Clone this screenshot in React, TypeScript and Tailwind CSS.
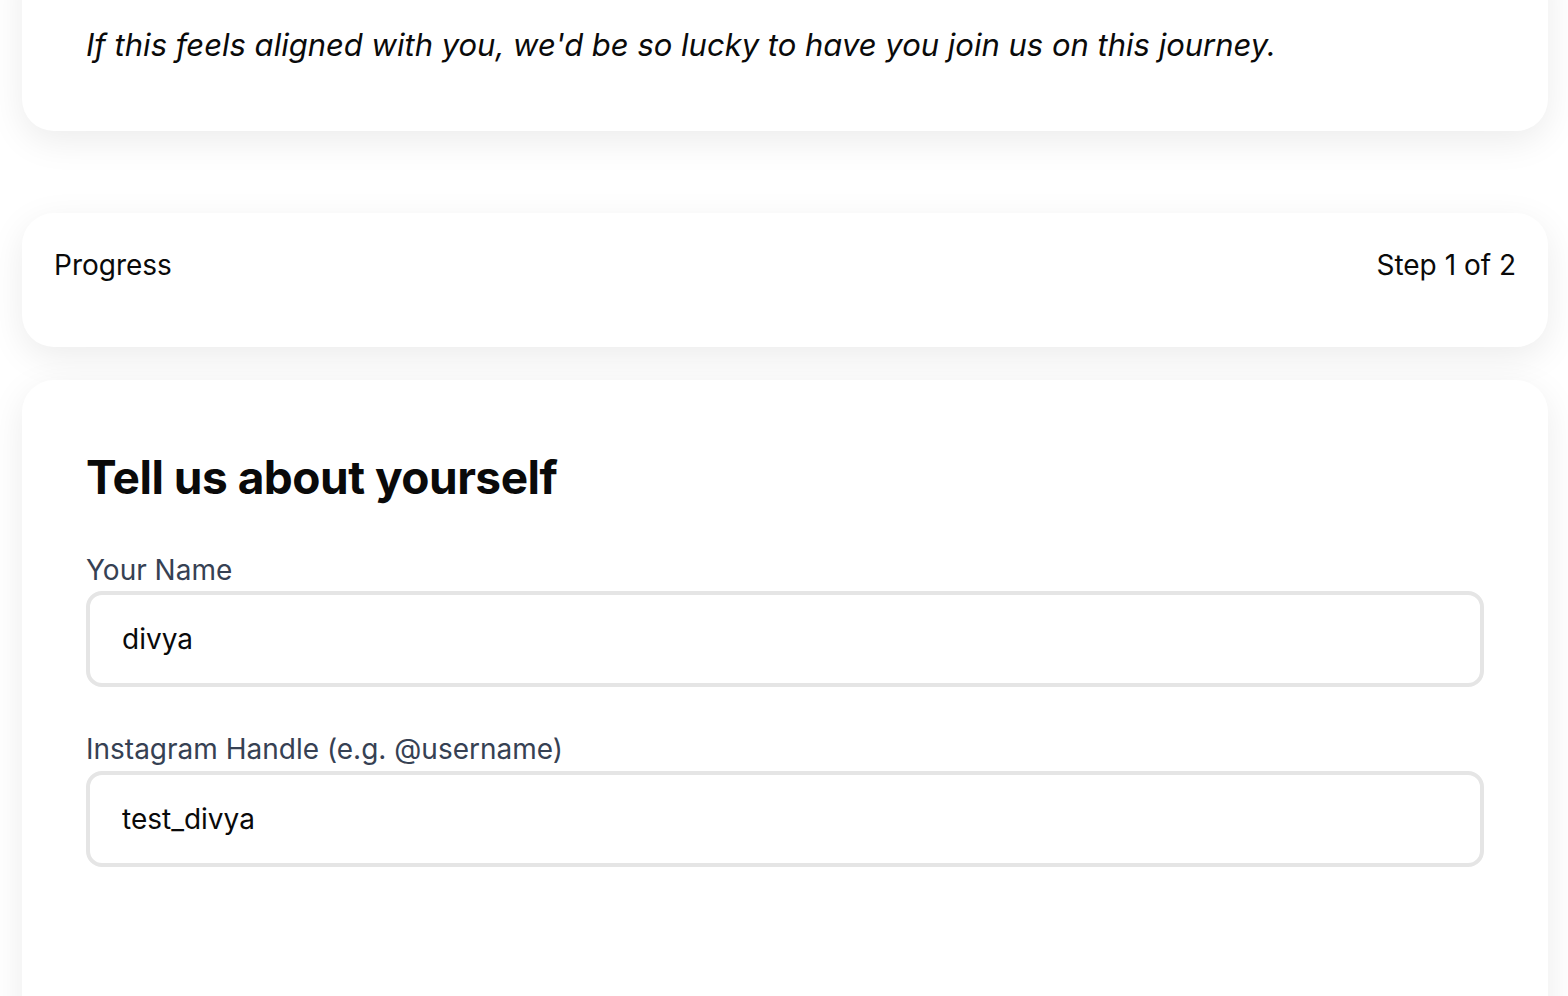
export default function App() {
  return (
    <div
      className="min-h-screen bg-white pl-[22px] pr-[20px] overflow-hidden"
      style={{ fontFamily: "Inter, 'Noto Sans', sans-serif" }}
    >
      <div className="-mt-[60px] rounded-[32px] bg-white pt-[82px] pb-[63px] px-[64px] shadow-[0_10px_36px_rgba(0,0,0,0.08)]">
        <p className="text-[31px] leading-[46px] italic text-[#0a0a0a]">
          If this feels aligned with you, we'd be so lucky to have you join us on this journey.
        </p>
      </div>

      <div className="mt-[82px] rounded-[32px] bg-white px-[32px] pt-[32px] pb-[62px] shadow-[0_10px_36px_rgba(0,0,0,0.08)]">
        <div className="flex items-center justify-between text-[28px] leading-[40px] text-[#0a0a0a]">
          <span>Progress</span>
          <span>Step 1 of 2</span>
        </div>
      </div>

      <div className="mt-[33px] rounded-t-[32px] bg-white px-[64px] pt-[65px] pb-[200px] shadow-[0_10px_36px_rgba(0,0,0,0.08)]">
        <h2 className="text-[46px] leading-[64px] font-bold tracking-[-0.5px] text-[#0a0a0a]">
          Tell us about yourself
        </h2>

        <div className="mt-[45px] flex flex-col gap-[5px]">
          <label className="text-[28px] leading-[32px] text-[#364153]">Your Name</label>
          <input
            readOnly
            value="divya"
            className="h-[96px] w-full rounded-[16px] border-[4px] border-[#e5e5e5] px-[32px] text-[28px] text-[#0a0a0a] outline-none"
          />
        </div>

        <div className="mt-[46px] flex flex-col gap-[6px]">
          <label className="text-[28px] leading-[32px] text-[#364153]">
            Instagram Handle (e.g. @username)
          </label>
          <input
            readOnly
            value="test_divya"
            className="h-[96px] w-full rounded-[16px] border-[4px] border-[#e5e5e5] px-[32px] text-[28px] text-[#0a0a0a] outline-none"
          />
        </div>
      </div>
    </div>
  );
}
